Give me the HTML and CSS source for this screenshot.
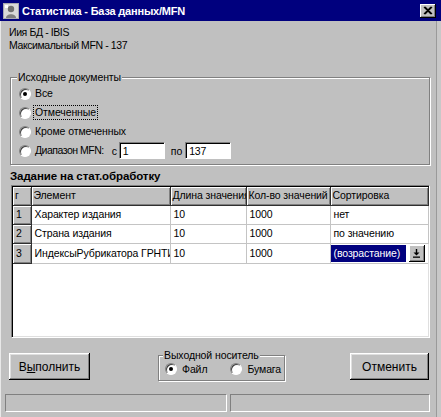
FILE: index.html
```html
<!DOCTYPE html>
<html>
<head>
<meta charset="utf-8">
<link rel="stylesheet" href="styles.css">
</head>
<body>
<div class="window">
  <div class="titlebar">
    <svg class="app-icon" width="16" height="16" viewBox="0 0 16 16">
      <rect x="0" y="0" width="16" height="16" fill="#a8a8b0"/>
      <rect x="1" y="1" width="14" height="14" fill="#d8d8d8"/>
      <circle cx="8" cy="6" r="3.2" fill="#707070"/>
      <path d="M3 15 C3 10 13 10 13 15 Z" fill="#808080"/>
      <rect x="2" y="2" width="3" height="3" fill="#ffffff"/>
    </svg>
    <span class="title-text">Статистика - База данных/MFN</span>
    <div class="close-btn">
      <svg width="10" height="9" viewBox="0 0 10 9"><path d="M1 1 L8 8 M8 1 L1 8 M2 1 L9 8 M9 1 L2 8" stroke="#000" stroke-width="1.2"/></svg>
    </div>
  </div>
  <div class="content">
    <div class="info">Иия БД - IBIS</div>
    <div class="info">Максимальный MFN - 137</div>

    <div class="group group-src">
      <div class="legend">Исходные документы</div>
      <div class="opt"><span class="radio checked"></span><span class="lbl">Все</span></div>
      <div class="opt"><span class="radio"></span><span class="lbl focus">Отмеченные</span></div>
      <div class="opt"><span class="radio"></span><span class="lbl">Кроме отмеченных</span></div>
      <div class="opt"><span class="radio"></span><span class="lbl lbl-range">Диапазон MFN:</span><span class="lbl-c">с</span><span class="edit e1">1</span><span class="lbl-po">по</span><span class="edit e2">137</span></div>
    </div>

    <div class="heading">Задание на стат.обработку</div>

    <div class="grid-frame">
      <table class="grid">
        <colgroup>
          <col class="c0"><col class="c1"><col class="c2"><col class="c3"><col class="c4">
        </colgroup>
        <tr class="hdr">
          <td class="fixed">г</td><td class="fixed">Элемент</td><td class="fixed">Длина значения</td><td class="fixed">Кол-во значений</td><td class="fixed">Сортировка</td>
        </tr>
        <tr>
          <td class="fixed">1</td><td>Характер издания</td><td>10</td><td>1000</td><td>нет</td>
        </tr>
        <tr>
          <td class="fixed">2</td><td>Страна издания</td><td>10</td><td>1000</td><td>по значению</td>
        </tr>
        <tr>
          <td class="fixed">3</td><td>ИндексыРубрикатора ГРНТИ</td><td>10</td><td>1000</td>
          <td class="editor-cell"><div class="editor"><span class="sel">(возрастание)</span><span class="drop">
            <svg width="9" height="9" viewBox="0 0 9 9"><path d="M4.5 0 V5" stroke="#000" stroke-width="1.4"/><path d="M1.5 3.5 H7.5 L4.5 6.5 Z" fill="#000"/><rect x="1" y="7.5" width="7" height="1.3" fill="#000"/></svg>
          </span></div></td>
        </tr>
      </table>
    </div>

    <div class="bottom">
      <div class="btn btn-run">В<u>ы</u>полнить</div>
      <div class="group group-out">
        <div class="legend">Выходной носитель</div>
        <div class="out-row">
          <span class="radio checked"></span><span class="lbl">Файл</span>
          <span class="radio r2"></span><span class="lbl">Бумага</span>
        </div>
      </div>
      <div class="btn btn-cancel">Отменить</div>
    </div>

    <div class="status">
      <div class="panel p1"></div>
      <div class="panel p2"></div>
    </div>
  </div>
</div>
</body>
</html>
```
FILE: styles.css
```css
html, body {
  margin: 0;
  padding: 0;
  background: #c0c0c0;
}
body {
  font-family: "Liberation Sans", Arial, sans-serif;
  font-size: 10.5px;
  letter-spacing: -0.1px;
  color: #000;
}
.window {
  width: 441px;
  height: 417px;
  box-sizing: border-box;
  background: #c0c0c0;
  display: flex;
  flex-direction: column;
  overflow: hidden;
  box-shadow: inset -4px 0 0 #c8c8c8, inset -5px 0 0 #9a9a9a, inset 1px 0 0 #e8e8e8;
}
.titlebar {
  height: 21px;
  background: #00007e;
  display: flex;
  align-items: center;
  padding: 0 5px 0 3px;
  flex: none;
}
.app-icon {
  flex: none;
  margin-top: 1px;
}
.title-text {
  color: #fff;
  font-weight: bold;
  font-size: 11px;
  margin-left: 3px;
  letter-spacing: -0.2px;
  flex: 1;
}
.close-btn {
  width: 16px;
  height: 14px;
  box-sizing: border-box;
  background: #c0c0c0;
  box-shadow: inset -1px -1px #000, inset 1px 1px #fff, inset -2px -2px #808080;
  display: flex;
  align-items: center;
  justify-content: center;
}
.content {
  flex: 1;
  display: flex;
  flex-direction: column;
  padding: 5px 0 0 6px;
}
.info {
  line-height: 13px;
  height: 13px;
  margin-left: 3px;
  letter-spacing: -0.4px;
}
.group {
  border: 1px solid #808080;
  box-shadow: 1px 1px 0 #fff, inset 1px 1px 0 #fff;
  box-sizing: border-box;
}
.legend {
  display: table;
  background: #c0c0c0;
  margin: -7px 0 0 -2px;
  padding: 0 1px;
  line-height: 13px;
  height: 13px;
}
.group-src {
  margin: 25px 0 0 4px;
  width: 420px;
  height: 88px;
  padding: 0 0 0 8px;
}
.opt {
  height: 19px;
  display: flex;
  align-items: center;
}
.radio {
  width: 12px;
  height: 12px;
  box-sizing: border-box;
  border-radius: 50%;
  background: #fff;
  border: 1px solid;
  border-color: #808080 #ffffff #ffffff #808080;
  box-shadow: inset 1px 1px 0 #404040;
  display: inline-flex;
  align-items: center;
  justify-content: center;
  flex: none;
}
.radio.checked::after {
  content: "";
  width: 4px;
  height: 4px;
  border-radius: 50%;
  background: #000;
}
.lbl {
  margin-left: 4px;
  line-height: 13px;
}
.lbl.focus {
  outline: 1px dotted #000;
  outline-offset: 0;
  padding: 0 1px;
  margin-left: 3px;
}
.lbl-range {
  letter-spacing: -0.5px;
}
.lbl-c {
  margin-left: 8px;
}
.lbl-po {
  margin-left: 6px;
}
.edit {
  height: 17px;
  box-sizing: border-box;
  background: #fff;
  border: 1px solid;
  border-color: #808080 #fff #fff #808080;
  box-shadow: inset 1px 1px 0 #000;
  padding: 2px 0 0 3px;
  line-height: 13px;
}
.e1 {
  width: 46px;
  margin-left: 2px;
}
.e2 {
  width: 46px;
  margin-left: 3px;
}
.heading {
  font-weight: bold;
  font-size: 11.5px;
  line-height: 15px;
  height: 15px;
  margin: 4px 0 0 4px;
  letter-spacing: -0.1px;
}
.grid-frame {
  margin: 1px 0 0 5px;
  width: 419px;
  height: 153px;
  box-sizing: border-box;
  background: #fff;
  border: 1px solid;
  border-color: #808080 #fff #fff #808080;
  box-shadow: inset 1px 1px 0 #000, inset -1px -1px 0 #dfdfdf;
  padding: 1px 0 0 1px;
  overflow: hidden;
}
.grid {
  border-collapse: collapse;
  table-layout: fixed;
  width: 415px;
}
.c0 { width: 18px; }
.c1 { width: 139px; }
.c2 { width: 76px; }
.c3 { width: 84px; }
.c4 { width: 98px; }
.grid td {
  height: 19px;
  padding: 0 0 0 3px;
  border-right: 1px solid #c4c4c4;
  border-bottom: 1px solid #c4c4c4;
  white-space: nowrap;
  overflow: hidden;
  box-sizing: border-box;
  line-height: 13px;
}
.grid tr.hdr td {
  height: 18px;
  padding-left: 2px;
}
.grid td.fixed {
  background: #c0c0c0;
  border-right: 1px solid #303030;
  border-bottom: 1px solid #303030;
  box-shadow: inset 1px 1px 0 #fff, inset -1px -1px 0 #808080;
}
.grid td.editor-cell {
  padding: 1px 0 1px 0;
  border-right: none;
}
.editor {
  display: flex;
  align-items: center;
  height: 17px;
}
.sel {
  background: #00007e;
  color: #fff;
  width: 75px;
  height: 17px;
  line-height: 17px;
  box-sizing: border-box;
  padding-left: 3px;
  white-space: nowrap;
  overflow: hidden;
}
.drop {
  width: 16px;
  height: 17px;
  margin-left: 3px;
  box-sizing: border-box;
  background: #c0c0c0;
  box-shadow: inset -1px -1px #000, inset 1px 1px #fff, inset -2px -2px #808080;
  display: flex;
  align-items: center;
  justify-content: center;
}
.bottom {
  display: flex;
  align-items: flex-start;
  margin-top: 15px;
  height: 28px;
}
.btn {
  height: 27px;
  box-sizing: border-box;
  background: #c0c0c0;
  box-shadow: inset -1px -1px #000, inset 1px 1px #fff, inset -2px -2px #808080, inset 2px 2px #dfdfdf;
  display: flex;
  align-items: center;
  justify-content: center;
  font-size: 12px;
  letter-spacing: 0;
}
.btn-run {
  width: 81px;
  margin-left: 3px;
}
.btn-cancel {
  width: 79px;
  margin-left: 65px;
}
.group-out {
  width: 127px;
  height: 26px;
  margin: 2px 0 0 68px;
  padding-left: 6px;
}
.group-out .legend {
  margin-left: -2px;
}
.out-row {
  display: flex;
  align-items: center;
  height: 12px;
  margin-top: 1px;
}
.out-row .lbl {
  margin-left: 5px;
}
.radio.r2 {
  margin-left: 23px;
}
.status {
  display: flex;
  margin: 13px 0 0 -1px;
  height: 18px;
}
.panel {
  height: 18px;
  box-sizing: border-box;
  border: 1px solid;
  border-color: #808080 #fff #fff #808080;
}
.p1 {
  width: 222px;
}
.p2 {
  width: 200px;
  margin-left: 3px;
}
```
